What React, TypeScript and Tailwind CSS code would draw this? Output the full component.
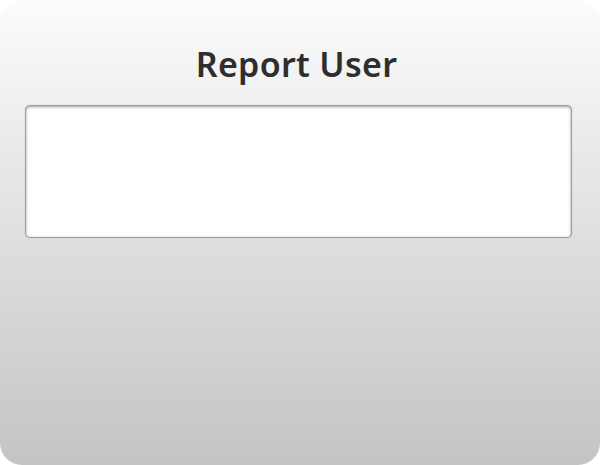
export default function App() {
  return (
    <div className="w-[600px] h-[465px] bg-white">
      <div
        className="w-[600px] h-[465px] rounded-[22px] bg-gradient-to-b from-[#fcfcfc] to-[#c4c4c4] flex flex-col pl-[25px] pr-[28px]"
        style={{ fontFamily: '"Noto Sans", "Open Sans", sans-serif' }}
      >
        <div className="h-[105px] flex items-center justify-center pt-[22px] pr-[4px]">
          <h1 className="text-[34px] font-semibold text-[#2e2e2e] tracking-[0.3px] leading-none">Report User</h1>
        </div>
        <div className="h-[133px] bg-white rounded-[5px] border border-[#a0a0a0] shadow-[inset_0_1px_3px_rgba(0,0,0,0.4),0_0_1px_rgba(0,0,0,0.3)]" />
      </div>
    </div>
  );
}
